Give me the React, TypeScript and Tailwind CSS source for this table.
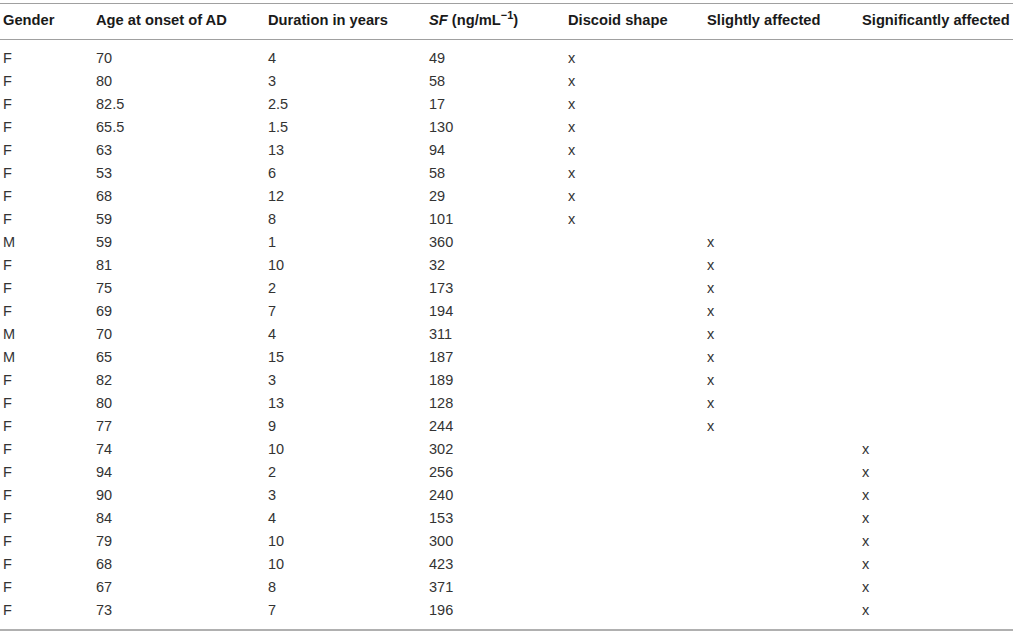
const rows: [string, string, string, string, number][] = [
  ['F', '70', '4', '49', 0],
  ['F', '80', '3', '58', 0],
  ['F', '82.5', '2.5', '17', 0],
  ['F', '65.5', '1.5', '130', 0],
  ['F', '63', '13', '94', 0],
  ['F', '53', '6', '58', 0],
  ['F', '68', '12', '29', 0],
  ['F', '59', '8', '101', 0],
  ['M', '59', '1', '360', 1],
  ['F', '81', '10', '32', 1],
  ['F', '75', '2', '173', 1],
  ['F', '69', '7', '194', 1],
  ['M', '70', '4', '311', 1],
  ['M', '65', '15', '187', 1],
  ['F', '82', '3', '189', 1],
  ['F', '80', '13', '128', 1],
  ['F', '77', '9', '244', 1],
  ['F', '74', '10', '302', 2],
  ['F', '94', '2', '256', 2],
  ['F', '90', '3', '240', 2],
  ['F', '84', '4', '153', 2],
  ['F', '79', '10', '300', 2],
  ['F', '68', '10', '423', 2],
  ['F', '67', '8', '371', 2],
  ['F', '73', '7', '196', 2],
];

const cols = 'grid grid-cols-[93px_172px_161px_139px_139px_155px_1fr] pl-[3px]';

export default function App() {
  return (
    <div className="w-[1013px] h-[632px] bg-white pt-[3px] font-['Liberation_Sans',Arial,sans-serif]">
      <div className="border-t border-[#a0a0a0]">
        <div className={`${cols} h-[36px] items-center pb-[3px] border-b border-[#a0a0a0] text-[14.7px] font-bold text-[#1a1a1a] whitespace-nowrap`}>
          <div>Gender</div>
          <div>Age at onset of AD</div>
          <div>Duration in years</div>
          <div>
            <i>SF</i> (ng/mL<span className="text-[11px] relative -top-[6px]">−1</span>)
          </div>
          <div>Discoid shape</div>
          <div>Slightly affected</div>
          <div>Significantly affected</div>
        </div>
        <div className="pt-[7px] pb-[7px] border-b-2 border-[#b0b0b0] text-[14.5px] text-[#333]">
          {rows.map((r, i) => (
            <div key={i} className={`${cols} h-[23px] items-center`}>
              <div>{r[0]}</div>
              <div>{r[1]}</div>
              <div>{r[2]}</div>
              <div>{r[3]}</div>
              <div>{r[4] === 0 ? 'x' : ''}</div>
              <div>{r[4] === 1 ? 'x' : ''}</div>
              <div>{r[4] === 2 ? 'x' : ''}</div>
            </div>
          ))}
        </div>
      </div>
    </div>
  );
}
